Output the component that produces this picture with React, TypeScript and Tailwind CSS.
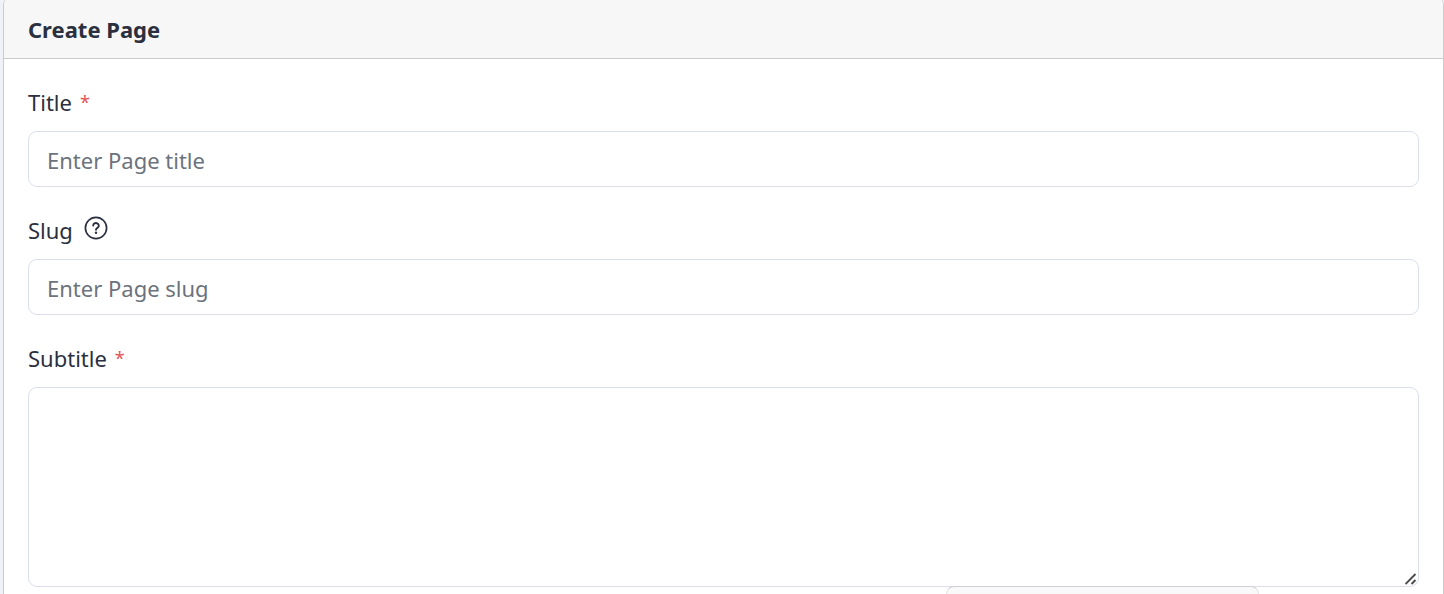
import React, { useState } from 'react';

const INPUT_CLASS =
  'block w-full rounded-[9px] border border-[#dbdfea] bg-white px-[18px] text-[#212837] placeholder:text-[#6c737c] placeholder:opacity-100 outline-none focus:border-[#8aa8f0]';

type FieldProps = {
  id: string;
  label: string;
  required?: boolean;
  hint?: string;
  children: React.ReactNode;
};

function HelpIcon() {
  return (
    <svg viewBox="0 0 24 24" className="h-6 w-6" fill="none" stroke="currentColor" strokeLinecap="round">
      <circle cx="12" cy="12" r="10.6" strokeWidth="1.7" />
      <path d="M9.2 9.6a2.8 2.6 0 1 1 4.6 2c-1.1.8-1.8 1.2-1.8 2.2" strokeWidth="1.9" />
      <circle cx="12" cy="16.8" r="1.2" fill="currentColor" stroke="none" />
    </svg>
  );
}

function Field({ id, label, required, hint, children }: FieldProps) {
  return (
    <div className="mb-6">
      <div className="mb-3 flex h-9 items-center">
        <label htmlFor={id} className="pt-0.5">
          {label}
          {required && <span className="ml-2 align-[2px] text-lg leading-none text-[#e55353]">*</span>}
        </label>
        {hint && (
          <button type="button" title={hint} aria-label={hint} className="mb-0.5 ml-[11px]">
            <HelpIcon />
          </button>
        )}
      </div>
      {children}
    </div>
  );
}

export default function App() {
  const [title, setTitle] = useState('');
  const [slug, setSlug] = useState('');
  const [subtitle, setSubtitle] = useState('');

  return (
    <div className="relative h-screen overflow-hidden bg-[#f1f2f7] pl-[3px] font-['Noto_Sans','Open_Sans',sans-serif] text-[22px] leading-9 text-[#2b3040]">
      <form className="-mt-1 min-h-[calc(100vh+20px)] overflow-hidden rounded-[9px] border border-[#cacbcd] bg-white">
        <header className="border-b border-[#cacbcd] bg-[#f7f7f7] px-6 pt-3.5 pb-[11px]">
          <h1 className="font-bold">Create Page</h1>
        </header>

        <div className="p-6">
          <Field id="title" label="Title" required>
            <input
              id="title"
              type="text"
              required
              placeholder="Enter Page title"
              value={title}
              onChange={(e) => setTitle(e.target.value)}
              className={`${INPUT_CLASS} h-14 pt-0.5`}
            />
          </Field>

          <Field id="slug" label="Slug" hint="Help about the slug">
            <input
              id="slug"
              type="text"
              placeholder="Enter Page slug"
              value={slug}
              onChange={(e) => setSlug(e.target.value)}
              className={`${INPUT_CLASS} h-14 pt-0.5`}
            />
          </Field>

          <Field id="subtitle" label="Subtitle" required>
            <div className="relative">
              <textarea
                id="subtitle"
                required
                value={subtitle}
                onChange={(e) => setSubtitle(e.target.value)}
                className={`${INPUT_CLASS} h-[200px] resize-y py-2 [&::-webkit-resizer]:bg-transparent`}
              />
              {/* resize grip */}
              <svg
                viewBox="0 0 12 12"
                className="pointer-events-none absolute right-0.5 bottom-0.5 h-3 w-3"
                fill="none"
                stroke="#4a4a4a"
                strokeWidth="1.9"
              >
                <path d="M0.5 11 L10.5 1 M6.5 11 L10.5 7" />
              </svg>
            </div>
          </Field>
        </div>
      </form>

      {/* floating panel that peeks in at the bottom edge */}
      <div className="absolute right-[185px] bottom-0 h-2 w-[313px] rounded-t-[14px] border border-b-0 border-[#e4e4e8] border-t-[#cfcfd8] bg-[#f9f9f9]" />
    </div>
  );
}
